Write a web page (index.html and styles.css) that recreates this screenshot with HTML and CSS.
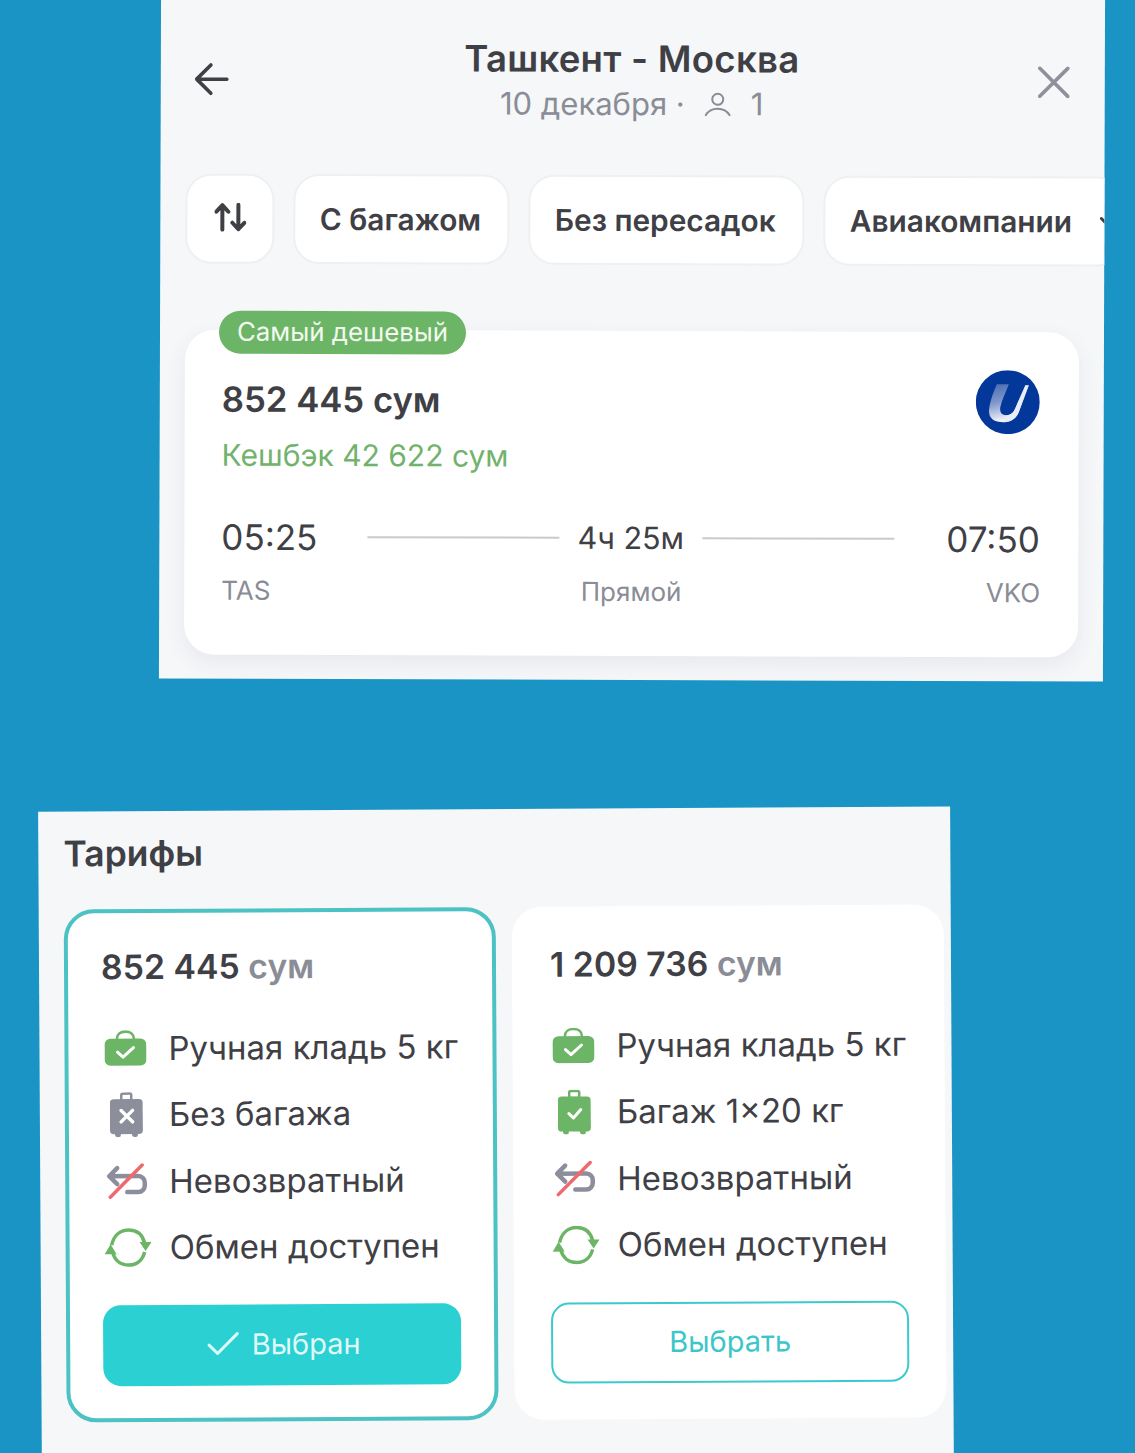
FILE: index.html
```html
<!DOCTYPE html>
<html lang="ru">
<head>
<meta charset="utf-8">
<title>Ташкент - Москва</title>
<link rel="stylesheet" href="styles.css">
</head>
<body>
<svg class="defs" aria-hidden="true">
  <symbol id="bag" viewBox="0 0 42 36">
    <path d="M12.500 11V8.500C12.500 4 16 1.500 21 1.500s8.500 2.500 8.500 7V11" fill="none" stroke="#6db566" stroke-width="2.600"/>
    <rect x="0" y="8.500" width="42" height="27" rx="6" fill="#6db566"/>
    <path d="M13 22l5.500 5L29 17.500" fill="none" stroke="#fff" stroke-width="3" stroke-linecap="round" stroke-linejoin="round"/>
  </symbol>
  <symbol id="case" viewBox="0 0 33 45">
    <rect x="11.500" y="1.500" width="10" height="7" rx="1.500" fill="none" stroke-width="2.500" stroke="currentColor"/>
    <rect x="0" y="7" width="33" height="35" rx="4" fill="currentColor"/>
    <rect x="5" y="40" width="6" height="5" rx="2.500" fill="currentColor"/>
    <rect x="22" y="40" width="6" height="5" rx="2.500" fill="currentColor"/>
  </symbol>
  <symbol id="noreturn" viewBox="0 0 42 36">
    <path d="M11 5L3 13l8 8M3 13h29a6.500 6.500 0 0 1 6.500 6.500v3a6.500 6.500 0 0 1-6.500 6.500H21" fill="none" stroke="#8c8e9c" stroke-width="4.500" stroke-linecap="round" stroke-linejoin="round"/>
    <path d="M4 34L36 2" stroke="#ee6a6f" stroke-width="3.500" stroke-linecap="round"/>
  </symbol>
  <symbol id="swap" viewBox="0 0 47 39">
    <path d="M7 17C9 8 15 2 24 2s14 5 16 13M40 24c-2 8-8 13-16 13S10 32 8 24" fill="none" stroke="#6db566" stroke-width="3.500"/>
    <path d="M35 14h12l-6 9zM0 26h12L6 16z" fill="#6db566"/>
  </symbol>
</svg>

<section class="panel panel-top">
  <header class="head">
    <svg class="back" viewBox="0 0 36 34" aria-hidden="true"><path d="M17 2L2 17l15 15M2 17h32" fill="none" stroke="#3f4046" stroke-width="3.800" stroke-linecap="round" stroke-linejoin="round"/></svg>
    <div class="head-text">
      <h1 class="route">Ташкент - Москва</h1>
      <p class="meta"><span>10 декабря ·</span>
        <svg class="person" viewBox="0 0 26 24" aria-hidden="true"><circle cx="13" cy="7" r="5.500" fill="none" stroke="#8a8c96" stroke-width="2"/><path d="M1 23c3-5 7-6.500 12-6.500S22 18 25 23" fill="none" stroke="#8a8c96" stroke-width="2" stroke-linecap="round"/></svg>
        <span>1</span></p>
    </div>
    <svg class="close" viewBox="0 0 32 32" aria-hidden="true"><path d="M2 2l28 28M30 2L2 30" stroke="#8f909c" stroke-width="3.600" stroke-linecap="round"/></svg>
  </header>

  <div class="chips">
    <div class="chip chip-icon"><svg class="sort" viewBox="0 0 32 29" aria-hidden="true"><path d="M8 27V3M2 9l6-6.500L14 9M24 2v24M18 20l6 6.500 6-6.500" fill="none" stroke="#3f4046" stroke-width="4" stroke-linecap="round" stroke-linejoin="round"/></svg></div>
    <div class="chip chip-bag">С багажом</div>
    <div class="chip chip-direct">Без пересадок</div>
    <div class="chip chip-air">Авиакомпании
      <svg class="chev" viewBox="0 0 16 10" aria-hidden="true"><path d="M2 2l6 6 6-6" fill="none" stroke="#3f4046" stroke-width="3" stroke-linecap="round" stroke-linejoin="round"/></svg>
    </div>
  </div>

  <article class="flight">
    <span class="badge">Самый дешевый</span>
    <div class="flight-top">
      <div>
        <div class="flight-price">852 445 сум</div>
        <div class="cashback">Кешбэк 42 622 сум</div>
      </div>
      <svg class="logo" viewBox="0 0 64 64" aria-hidden="true">
        <defs><linearGradient id="ug" x1="0.100" y1="0" x2="0.350" y2="0.950"><stop offset="0" stop-color="#4c6db3"/><stop offset="0.500" stop-color="#7f97cb"/><stop offset="1" stop-color="#f0f3fa"/></linearGradient></defs>
        <circle cx="32" cy="32" r="32" fill="#04379a"/>
        <path d="M21 14h12c-3 8-7 16-8.500 23-.8 5 1.500 8 6 8 4 0 7-2 9-7l10-23h3.500L43 42c-2.500 6-7 10-15 10-11 0-16-5-14.500-14C14.500 30 18 21 21 14z" fill="url(#ug)"/>
        <path d="M30.500 45c4 0 7-2 9-7l10-23H53L43 42c-2.500 6-7 10-15 10z" fill="#e8edf7"/>
      </svg>
    </div>
    <div class="times">
      <div class="time">05:25</div>
      <div class="line"></div>
      <div class="dur">4ч 25м</div>
      <div class="line"></div>
      <div class="time">07:50</div>
    </div>
    <div class="codes"><span>TAS</span><span class="direct">Прямой</span><span>VKO</span></div>
  </article>
</section>

<section class="panel panel-bottom">
  <h2 class="tariffs-title">Тарифы</h2>
  <div class="tariffs">
    <article class="tariff tariff-on">
      <div class="tariff-price">852 445 <span class="cur">сум</span></div>
      <ul class="perks">
        <li><span class="ico"><svg class="i-bag"><use href="#bag"/></svg></span>Ручная кладь 5 кг</li>
        <li><span class="ico ico-case"><svg class="i-case grey"><use href="#case"/></svg><svg class="mark" viewBox="0 0 14 14"><path d="M2 2l10 10M12 2L2 12" stroke="#fff" stroke-width="3" stroke-linecap="round"/></svg></span>Без багажа</li>
        <li><span class="ico"><svg class="i-ret"><use href="#noreturn"/></svg></span>Невозвратный</li>
        <li><span class="ico"><svg class="i-swap"><use href="#swap"/></svg></span>Обмен доступен</li>
      </ul>
      <div class="btn btn-on"><svg class="tick" viewBox="0 0 34 26" aria-hidden="true"><path d="M2 14l9 9L32 2" fill="none" stroke="#dff8f8" stroke-width="3.200" stroke-linecap="round" stroke-linejoin="round"/></svg>Выбран</div>
    </article>
    <article class="tariff tariff-off">
      <div class="tariff-price">1 209 736 <span class="cur">сум</span></div>
      <ul class="perks">
        <li><span class="ico"><svg class="i-bag"><use href="#bag"/></svg></span>Ручная кладь 5 кг</li>
        <li><span class="ico ico-case"><svg class="i-case green"><use href="#case"/></svg><svg class="mark" viewBox="0 0 16 14"><path d="M2 7l4.500 4.500L14 3" fill="none" stroke="#fff" stroke-width="3" stroke-linecap="round" stroke-linejoin="round"/></svg></span>Багаж 1×20 кг</li>
        <li><span class="ico"><svg class="i-ret"><use href="#noreturn"/></svg></span>Невозвратный</li>
        <li><span class="ico"><svg class="i-swap"><use href="#swap"/></svg></span>Обмен доступен</li>
      </ul>
      <div class="btn btn-off">Выбрать</div>
    </article>
  </div>
</section>
</body>
</html>
```
FILE: styles.css
```css
* { box-sizing: border-box; }
html, body { margin: 0; height: 1453px; overflow: hidden; }
body {
  background: #1a93c5;
  font-family: Inter, "Noto Sans", sans-serif;
  color: #3f4046;
  display: flex;
  flex-direction: column;
  align-items: flex-start;
}
.defs { position: absolute; width: 0; height: 0; }

.panel { background: #f5f7f9; flex: none; overflow: hidden; }
.panel-top {
  width: 944px;
  height: 690px;
  margin: -10px 0 0 160px;
  padding: 10px 0 0 24px;
  transform: rotate(0.18deg);
}
.panel-bottom {
  width: 912px;
  height: 660px;
  margin: 129px 0 0 40px;
  padding: 22px 0 0 25px;
  transform: rotate(-0.33deg);
}

.head { display: flex; align-items: flex-start; height: 175px; padding: 37px 35px 0 10px; }
.back { width: 34px; height: 33px; margin-top: 27px; flex: none; }
.head-text { flex: 1; text-align: center; padding-left: 5px; padding-right: 8px; }
.route { margin: 0; font-size: 36.500px; line-height: 44px; font-weight: 600; letter-spacing: 0.3px; }
.meta { margin: 3px 0 0; display: flex; justify-content: center; align-items: center; gap: 20px; font-size: 31px; line-height: 40px; color: #8a8c96; }
.person { width: 26px; height: 24px; }
.close { width: 32px; height: 32px; margin-top: 28px; flex: none; }

.chips { display: flex; gap: 19px; height: 90px; margin-left: 1px; width: 960px; }
.chip {
  flex: none;
  height: 90px;
  background: #fff;
  border: 2px solid #eef0f2;
  border-radius: 26px;
  display: flex;
  align-items: center;
  font-size: 29.800px;
  font-weight: 600;
  padding-left: 25px;
}
.chip-icon { width: 88.500px; padding: 0; justify-content: center; }
.sort { width: 32px; height: 29px; margin-top: -3px; margin-left: 1px; }
.chip-bag { width: 216px; }
.chip-direct { width: 276px; }
.chip-air { width: 300px; gap: 27px; }
.chev { width: 16px; height: 10px; flex: none; }

.flight {
  position: relative;
  width: 894px;
  height: 325px;
  margin: 66px 0 0 1px;
  background: #fff;
  border-radius: 30px;
  padding: 46px 38px 0 37px;
  box-shadow: 0 8px 22px rgba(60, 70, 90, 0.08);
}
.badge {
  position: absolute;
  left: 34px;
  top: -19px;
  height: 43px;
  padding: 0 18px;
  border-radius: 22px;
  background: #6db566;
  color: #f3f9f1;
  font-size: 25.800px;
  line-height: 42px;
  white-space: nowrap;
}
.flight-top { display: flex; justify-content: space-between; align-items: flex-start; height: 139px; }
.flight-price { font-size: 34.700px; line-height: 46px; font-weight: 600; }
.cashback { font-size: 30px; line-height: 40px; margin-top: 13px; color: #71b26c; }
.logo { width: 64px; height: 64px; margin: -8px 1px 0 0; }
.times { display: flex; align-items: center; height: 44px; }
.time { font-size: 35px; font-weight: 400; line-height: 44px; width: 94px; }
.line { flex: 1; height: 2px; background: #c8cacd; }
.times .time:first-child { margin-right: 52px; }
.times .time:last-child { margin-left: 52px; }
.dur { font-size: 30.500px; padding: 0 18px; line-height: 44px; }
.codes { display: flex; justify-content: space-between; font-size: 26px; line-height: 36px; margin-top: 14px; color: #8a8c96; }
.direct { margin-left: 6px; }

.tariffs-title { margin: 0; font-size: 35.500px; line-height: 42px; font-weight: 600; }
.tariffs { display: flex; gap: 16px; margin-top: 34px; }
.tariff {
  width: 432px;
  height: 513px;
  background: #fff;
  border-radius: 30px;
  padding: 0 36px;
}
.tariff-on { border: 4px solid #4dc2c4; padding: 31px 33px 0; }
.tariff-off { padding: 35px 37px 0 38px; }
.tariff-price { font-size: 33.800px; line-height: 46px; font-weight: 600; }
.cur { color: #8a8c96; }
.perks { list-style: none; margin: 25px 0 0; padding: 0; }
.perks li { display: flex; align-items: center; height: 66.300px; font-size: 33px; white-space: nowrap; }
.tariff-off .perks { margin-left: -1px; }
.ico { position: relative; width: 67px; flex: none; display: flex; align-items: center; }
.i-bag { width: 42px; height: 36px; margin-left: 3px; }
.i-case { width: 33px; height: 45px; margin-left: 8px; }
.i-ret { width: 42px; height: 36px; margin-left: 4px; }
.i-swap { width: 47px; height: 39px; margin-left: 2px; }
.grey { color: #8c8e9c; }
.green { color: #6db566; }
.mark { position: absolute; left: 17px; top: 50%; width: 16px; height: 16px; margin-top: -6px; }
.btn {
  display: flex;
  align-items: center;
  justify-content: center;
  gap: 13px;
  width: 358px;
  height: 81px;
  margin-top: 25px;
  padding-bottom: 2px;
  border-radius: 18px;
  font-size: 29px;
}
.tariff-off .btn { margin-left: -1px; }
.btn-on { background: #2bd0d2; color: #dff8f8; padding-left: 3px; }
.btn-off { background: #fff; border: 2.500px solid #3cc9cc; color: #3cc6ca; }
.tick { width: 32px; height: 25px; }
```
